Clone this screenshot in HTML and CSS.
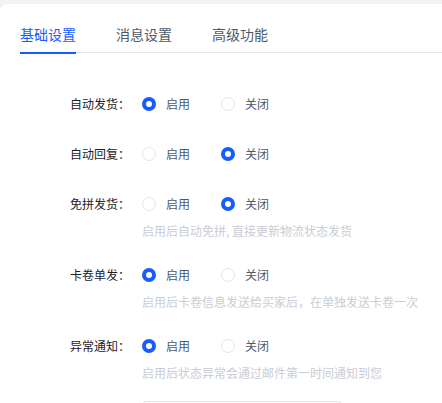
FILE: index.html
```html
<!DOCTYPE html>
<html lang="zh-CN">
<head>
<meta charset="utf-8">
<link rel="stylesheet" href="styles.css">
</head>
<body>
<div class="card">
  <div class="tabs">
    <div class="tab active">基础设置</div>
    <div class="tab">消息设置</div>
    <div class="tab">高级功能</div>
  </div>
  <div class="form">
    <div class="item">
      <div class="label">自动发货：</div>
      <div class="control">
        <div class="radios">
          <span class="radio checked"><i class="dot"></i><span class="rtext">启用</span></span>
          <span class="radio"><i class="dot"></i><span class="rtext">关闭</span></span>
        </div>
      </div>
    </div>
    <div class="item">
      <div class="label">自动回复：</div>
      <div class="control">
        <div class="radios">
          <span class="radio"><i class="dot"></i><span class="rtext">启用</span></span>
          <span class="radio checked"><i class="dot"></i><span class="rtext">关闭</span></span>
        </div>
      </div>
    </div>
    <div class="item">
      <div class="label">免拼发货：</div>
      <div class="control">
        <div class="radios">
          <span class="radio"><i class="dot"></i><span class="rtext">启用</span></span>
          <span class="radio checked"><i class="dot"></i><span class="rtext">关闭</span></span>
        </div>
        <div class="help">启用后自动免拼, 直接更新物流状态发货</div>
      </div>
    </div>
    <div class="item">
      <div class="label">卡卷单发：</div>
      <div class="control">
        <div class="radios">
          <span class="radio checked"><i class="dot"></i><span class="rtext">启用</span></span>
          <span class="radio"><i class="dot"></i><span class="rtext">关闭</span></span>
        </div>
        <div class="help">启用后卡卷信息发送给买家后，在单独发送卡卷一次</div>
      </div>
    </div>
    <div class="item">
      <div class="label">异常通知：</div>
      <div class="control">
        <div class="radios">
          <span class="radio checked"><i class="dot"></i><span class="rtext">启用</span></span>
          <span class="radio"><i class="dot"></i><span class="rtext">关闭</span></span>
        </div>
        <div class="help">启用后状态异常会通过邮件第一时间通知到您</div>
      </div>
    </div>
    <div class="item">
      <div class="label"></div>
      <div class="control">
        <div class="box"></div>
      </div>
    </div>
  </div>
</div>
</body>
</html>
```

FILE: styles.css
```css
html, body {
  margin: 0;
  padding: 0;
}
body {
  background: #f2f3f5;
  font-family: "Noto Sans CJK SC", "Noto Sans", sans-serif;
  height: 403px;
  overflow: hidden;
  padding-top: 4px;
  box-sizing: border-box;
}
.card {
  background: #ffffff;
  border-top-left-radius: 8px;
  height: 399px;
  overflow: hidden;
}
.tabs {
  display: flex;
  gap: 40px;
  margin-left: 20px;
  border-bottom: 1px solid #e5e6eb;
}
.tab {
  position: relative;
  font-size: 14px;
  line-height: 22px;
  padding-top: 19px;
  padding-bottom: 7px;
  color: #4e5969;
}
.tab.active {
  color: #165dff;
}
.tab.active::after {
  content: "";
  position: absolute;
  left: 0;
  right: 0;
  bottom: -2px;
  height: 2px;
  background: #165dff;
}
.form {
  padding-top: 35px;
}
.item {
  display: grid;
  grid-template-columns: 130px 1fr;
  column-gap: 12px;
  margin-bottom: 18px;
}
.label {
  font-size: 12px;
  line-height: 32px;
  color: #1d2129;
  text-align: right;
}
.radios {
  display: flex;
  align-items: center;
  height: 32px;
}
.radio {
  display: flex;
  align-items: center;
  gap: 10px;
  margin-right: 31px;
}
.dot {
  display: block;
  width: 14px;
  height: 14px;
  box-sizing: border-box;
  border-radius: 50%;
  border: 1px solid #e5e6eb;
  background: #ffffff;
}
.radio.checked .dot {
  border: 4px solid #165dff;
}
.rtext {
  font-size: 12px;
  line-height: 20px;
  color: #4e5969;
}
.help {
  margin-top: 1px;
  font-size: 12px;
  line-height: 20px;
  color: #c9cdd4;
  white-space: nowrap;
}
.box {
  width: 200px;
  height: 32px;
  box-sizing: border-box;
  border: 1px solid #e5e6eb;
  border-radius: 4px;
}
```
